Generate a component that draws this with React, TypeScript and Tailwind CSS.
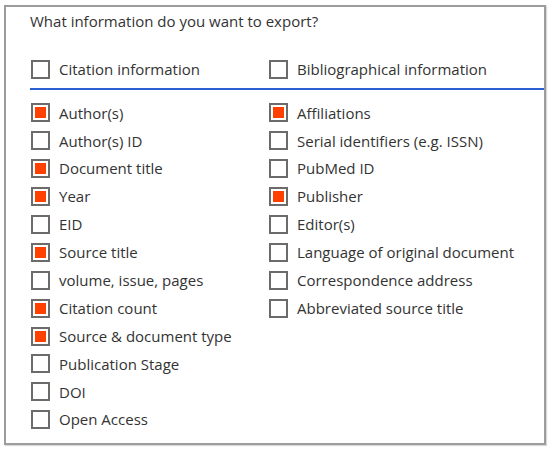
import React from "react";

const left: [string, boolean][] = [
  ["Author(s)", true],
  ["Author(s) ID", false],
  ["Document title", true],
  ["Year", true],
  ["EID", false],
  ["Source title", true],
  ["volume, issue, pages", false],
  ["Citation count", true],
  ["Source & document type", true],
  ["Publication Stage", false],
  ["DOI", false],
  ["Open Access", false],
];

const right: [string, boolean][] = [
  ["Affiliations", true],
  ["Serial identifiers (e.g. ISSN)", false],
  ["PubMed ID", false],
  ["Publisher", true],
  ["Editor(s)", false],
  ["Language of original document", false],
  ["Correspondence address", false],
  ["Abbreviated source title", false],
];

function Box({ checked }: { checked: boolean }) {
  return (
    <span className="w-[19px] h-[19px] border-2 border-[#6b6b6b] bg-white flex items-center justify-center shrink-0">
      {checked && <span className="w-[11px] h-[11px] bg-[#ff4000]" />}
    </span>
  );
}

function Item({ label, checked }: { label: string; checked: boolean }) {
  return (
    <div className="flex items-center gap-[9px] h-[27.9px]">
      <Box checked={checked} />
      <span>{label}</span>
    </div>
  );
}

export default function App() {
  return (
    <div className="w-[550px] h-[450px] bg-white pt-[5px] pl-[4px] font-['Open_Sans',sans-serif] text-[15px] text-[#333]">
      <div className="w-[542px] h-[440px] border-[2.5px] border-[#9c9c9c] shadow-[1px_1px_1px_rgba(0,0,0,0.15)] pl-[24px] pt-[2px]">
        <div className="h-[24px] leading-[24px]">What information do you want to export?</div>
        <div className="flex mt-[22px] h-[28px] items-center">
          <div className="w-[239px] pl-[1px] flex items-center gap-[9px]">
            <Box checked={false} />
            <span>Citation information</span>
          </div>
          <div className="flex items-center gap-[9px]">
            <Box checked={false} />
            <span>Bibliographical information</span>
          </div>
        </div>
        <div className="h-[2px] bg-[#2d5fd4] mt-[5px]" />
        <div className="flex mt-[9px]">
          <div className="w-[239px] pl-[1px]">
            {left.map(([l, c]) => (
              <Item key={l} label={l} checked={c} />
            ))}
          </div>
          <div>
            {right.map(([l, c]) => (
              <Item key={l} label={l} checked={c} />
            ))}
          </div>
        </div>
      </div>
    </div>
  );
}
